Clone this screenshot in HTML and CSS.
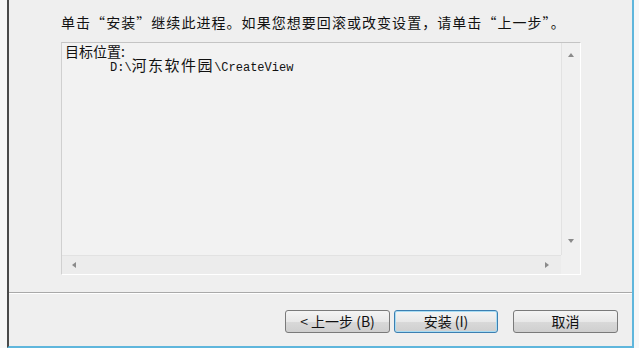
FILE: index.html
```html
<!DOCTYPE html>
<html lang="zh-CN">
<head>
    <meta charset="UTF-8">
    <title>安装</title>
    <link rel="stylesheet" href="styles.css">
</head>
<body>
    <div class="window">
        <div class="content">
            <div class="intro">单击“安装”继续此进程。如果您想要回滚或改变设置，请单击“上一步”。</div>
            <div class="summary">
                <div class="summary-text">
                    <div class="label">目标位置:</div>
                    <div class="path">D:\<span class="cjk">河东软件园</span>\CreateView</div>
                </div>
                <div class="vscroll">
                    <span class="arrow up"></span>
                    <span class="arrow down"></span>
                </div>
                <div class="hscroll">
                    <span class="arrow left"></span>
                    <span class="arrow right"></span>
                </div>
                <div class="corner"></div>
            </div>
        </div>
        <div class="footer">
            <button class="btn">&lt;&nbsp;上一步 (B)</button>
            <button class="btn default">安装 (I)</button>
            <button class="btn cancel">取消</button>
        </div>
    </div>
</body>
</html>
```
FILE: styles.css
```css
*{
    box-sizing: border-box;
}
body{
    margin: 0;
    background-color: #f7f7f7;
    font-family: "Noto Sans CJK SC", "Liberation Sans", sans-serif;
    color: #111;
}
.window{
    margin-left: 7px;
    width: 627px;
    height: 348px;
    background-color: #efefef;
    border-left: 2px solid #4a4a4a;
    border-right: 2px solid #5fb6dc;
    border-bottom: 2px solid #5fb6dc;
    display: flex;
    flex-direction: column;
}
.content{
    padding: 12px 0 0 52px;
    height: 292px;
    flex-shrink: 0;
}
.intro{
    font-size: 14px;
    line-height: 20px;
    letter-spacing: 1.05px;
    white-space: nowrap;
}
.summary{
    margin-top: 10px;
    width: 520px;
    height: 233px;
    background-color: #f2f2f2;
    border-top: 1px solid #c4c4c4;
    border-left: 1px solid #d0d0d0;
    border-right: 1px solid #ffffff;
    border-bottom: 1px solid #ffffff;
    display: grid;
    grid-template-columns: 1fr 19px;
    grid-template-rows: 1fr 19px;
}
.summary-text{
    padding: 1px 0 0 3px;
}
.label{
    font-size: 14px;
    line-height: 14px;
}
.path{
    padding-left: 45px;
    font-family: "Liberation Mono", "Noto Sans CJK SC", monospace;
    font-size: 12px;
    line-height: 13px;
    white-space: nowrap;
}
.path .cjk{
    font-family: "Noto Sans CJK SC", sans-serif;
    font-size: 15px;
    letter-spacing: 1.5px;
}
.vscroll{
    border-left: 1px solid #e2e2e2;
    background-color: #f0f0f0;
    display: flex;
    flex-direction: column;
    justify-content: space-between;
    align-items: center;
    padding: 10px 0 12px;
}
.hscroll{
    border-top: 1px solid #e2e2e2;
    background-color: #ececec;
    display: flex;
    justify-content: space-between;
    align-items: center;
    padding: 0 12px 0 10px;
}
.corner{
    background-color: #f0f0f0;
}
.arrow{
    width: 0;
    height: 0;
    border: 3px solid transparent;
}
.arrow.up{
    border-bottom: 4px solid #8a8a8a;
    border-top: 0;
}
.arrow.down{
    border-top: 4px solid #8a8a8a;
    border-bottom: 0;
}
.arrow.left{
    border-right: 4px solid #8a8a8a;
    border-left: 0;
}
.arrow.right{
    border-left: 4px solid #8a8a8a;
    border-right: 0;
}
.footer{
    border-top: 1px solid #a9a9a9;
    box-shadow: inset 0 1px 0 #ffffff;
    flex: 1;
    display: flex;
    justify-content: flex-end;
    align-items: flex-start;
    padding: 17px 14px 0 0;
    gap: 4px;
}
.btn{
    width: 105px;
    height: 23px;
    font-family: "Noto Sans CJK SC", "Liberation Sans", sans-serif;
    font-size: 14px;
    line-height: 19px;
    color: #111;
    border: 1px solid #7a7a7a;
    border-radius: 3px;
    background: linear-gradient(#f4f4f4, #e8e8e8 50%, #d9d9d9 51%, #cfcfcf);
    padding: 0;
}
.btn.default{
    width: 104px;
    border-color: #3c7fb1;
    box-shadow: inset 0 0 0 1px #a8dcf3;
}
.btn.cancel{
    margin-left: 11px;
}
```
